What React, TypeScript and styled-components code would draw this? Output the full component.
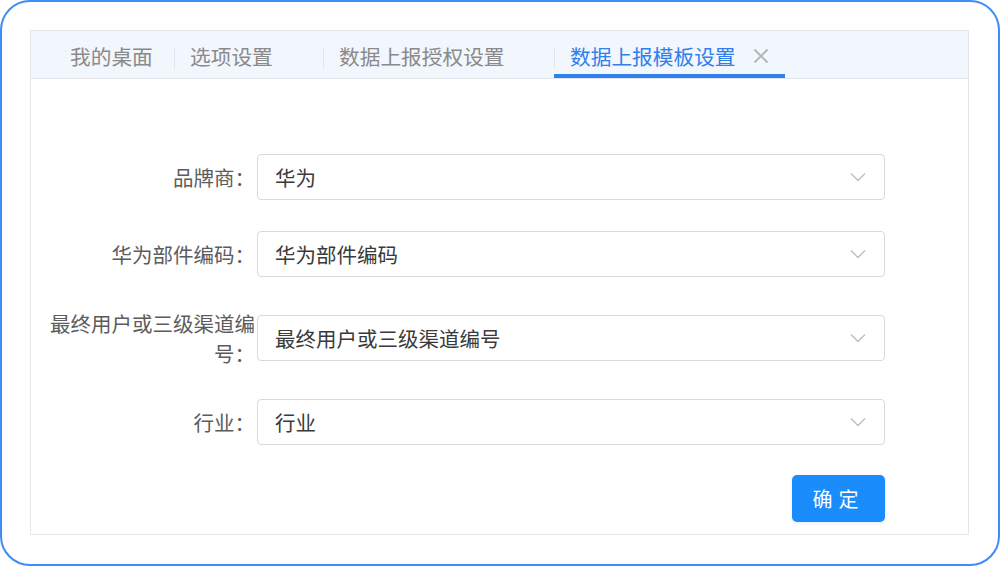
import React from "react";
import styled, { createGlobalStyle } from "styled-components";

const Global = createGlobalStyle`
  html, body { margin: 0; padding: 0; background: #ffffff; }
  body { font-family: "Noto Sans CJK SC", "Noto Sans", sans-serif; }
  * { box-sizing: border-box; }
`;

const Frame = styled.div`
  width: 1000px;
  height: 566px;
  border: 2px solid #3e8cf6;
  border-radius: 30px;
  padding: 28px 29px 29px 28px;
  background: #fff;
`;

const Panel = styled.div`
  width: 939px;
  height: 505px;
  border: 1px solid #e4e6ea;
  display: flex;
  flex-direction: column;
`;

const TabBar = styled.div`
  height: 48px;
  background: #f2f6fd;
  border-bottom: 1px solid #e4e6ea;
  display: flex;
  align-items: stretch;
  padding-left: 23px;
`;

const Tab = styled.div<{ $w: number; $active?: boolean; $sep?: boolean }>`
  position: relative;
  width: ${(p) => p.$w}px;
  height: 47px;
  padding: 3px 0 0 16px;
  display: flex;
  align-items: center;
  gap: 17px;
  font-size: 20.7px;
  color: ${(p) => (p.$active ? "#2f80ec" : "#8a8a8a")};
  white-space: nowrap;
  &::before {
    content: "";
    display: ${(p) => (p.$sep ? "block" : "none")};
    position: absolute;
    left: 0;
    top: 16px;
    width: 1px;
    height: 22px;
    background: #e2e4e8;
  }
  &::after {
    content: "";
    display: ${(p) => (p.$active ? "block" : "none")};
    position: absolute;
    left: 0;
    right: 0;
    bottom: 0;
    height: 4px;
    background: #2f80ec;
  }
`;

const Close = styled.svg`
  width: 16px;
  height: 16px;
`;

const Form = styled.div`
  padding: 75px 83px 0 17px;
  display: flex;
  flex-direction: column;
`;

const Rows = styled.div`
  display: grid;
  grid-template-columns: 207px 1fr;
  column-gap: 2px;
  row-gap: 31px;
  align-items: center;
`;

const Label = styled.div`
  font-size: 20.5px;
  line-height: 30px;
  color: #5c5c5c;
  text-align: right;
`;

const Select = styled.div`
  height: 46px;
  border: 1px solid #d9d9d9;
  border-radius: 4px;
  padding: 0 18px 0 17px;
  display: flex;
  align-items: center;
  justify-content: space-between;
  font-size: 20.5px;
  color: #3a3a3a;
  background: #fff;
`;

const Chevron = styled.svg`
  width: 16px;
  height: 10px;
`;

const Actions = styled.div`
  display: flex;
  justify-content: flex-end;
  margin-top: 30px;
`;

const Button = styled.button`
  width: 93px;
  height: 47px;
  border: none;
  border-radius: 5px;
  background: #1a8cfb;
  color: #fff;
  font-family: "Noto Sans CJK SC", sans-serif;
  font-size: 20px;
  letter-spacing: 6px;
  padding-left: 6px;
  box-shadow: 0 1px 3px rgba(26, 140, 251, 0.15);
`;

const tabs = [
  { t: "我的桌面", w: 120 },
  { t: "选项设置", w: 149, sep: true },
  { t: "数据上报授权设置", w: 231, sep: true },
  { t: "数据上报模板设置", w: 231, sep: true, active: true },
];

const fields = [
  { label: "品牌商：", value: "华为" },
  { label: "华为部件编码：", value: "华为部件编码" },
  { label: "最终用户或三级渠道编号：", value: "最终用户或三级渠道编号" },
  { label: "行业：", value: "行业" },
];

export default function App() {
  return (
    <>
      <Global />
      <Frame>
        <Panel>
          <TabBar>
            {tabs.map((tab) => (
              <Tab key={tab.t} $w={tab.w} $sep={tab.sep} $active={tab.active}>
                {tab.t}
                {tab.active && (
                  <Close viewBox="0 0 16 16">
                    <path d="M1.5 1.5 L14.5 14.5 M14.5 1.5 L1.5 14.5" stroke="#b3b3b3" strokeWidth="1.8" fill="none" />
                  </Close>
                )}
              </Tab>
            ))}
          </TabBar>
          <Form>
            <Rows>
              {fields.map((f) => (
                <React.Fragment key={f.label}>
                  <Label>{f.label}</Label>
                  <Select>
                    <span>{f.value}</span>
                    <Chevron viewBox="0 0 16 10">
                      <path d="M1 1.5 L8 8.5 L15 1.5" stroke="#bdbdbd" strokeWidth="1.3" fill="none" />
                    </Chevron>
                  </Select>
                </React.Fragment>
              ))}
            </Rows>
            <Actions>
              <Button>确定</Button>
            </Actions>
          </Form>
        </Panel>
      </Frame>
    </>
  );
}
